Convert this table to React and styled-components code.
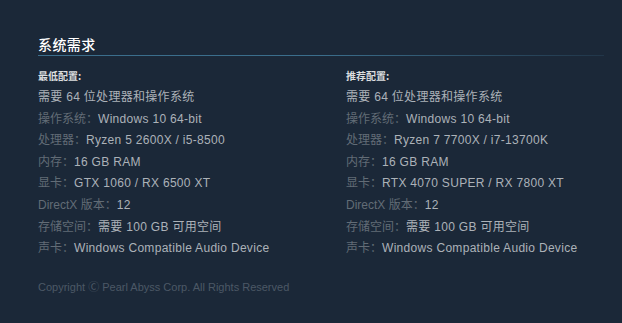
import React from 'react';
import styled, { createGlobalStyle } from 'styled-components';

const GlobalStyle = createGlobalStyle`
  html, body {
    margin: 0;
    padding: 0;
    background: #1b2838;
  }
  body {
    font-family: "Liberation Sans", Arial, "Noto Sans CJK SC", sans-serif;
  }
`;

const minimo = [
    { label: '操作系统：', value: 'Windows 10 64-bit' },
    { label: '处理器：', value: 'Ryzen 5 2600X / i5-8500' },
    { label: '内存：', value: '16 GB RAM' },
    { label: '显卡：', value: 'GTX 1060 / RX 6500 XT' },
    { label: 'DirectX 版本：', value: '12' },
    { label: '存储空间：', value: '需要 100 GB 可用空间' },
    { label: '声卡：', value: 'Windows Compatible Audio Device' },
];

const recomendado = [
    { label: '操作系统：', value: 'Windows 10 64-bit' },
    { label: '处理器：', value: 'Ryzen 7 7700X / i7-13700K' },
    { label: '内存：', value: '16 GB RAM' },
    { label: '显卡：', value: 'RTX 4070 SUPER / RX 7800 XT' },
    { label: 'DirectX 版本：', value: '12' },
    { label: '存储空间：', value: '需要 100 GB 可用空间' },
    { label: '声卡：', value: 'Windows Compatible Audio Device' },
];

const Columna = ({ titulo, filas }) => (
    <Col>
        <ColTitulo>{titulo}</ColTitulo>
        <Lista>
            <Fila>需要 64 位处理器和操作系统</Fila>
            {filas.map(f => (
                <Fila key={f.label}>
                    <Etiqueta>{f.label}</Etiqueta>{f.value}
                </Fila>
            ))}
        </Lista>
    </Col>
);

const App = () => {
    return (
        <Pagina>
            <GlobalStyle />
            <Titulo>系统需求</Titulo>
            <Columnas>
                <Columna titulo="最低配置:" filas={minimo} />
                <Columna titulo="推荐配置:" filas={recomendado} />
            </Columnas>
            <Copyright>Copyright Ⓒ Pearl Abyss Corp. All Rights Reserved</Copyright>
        </Pagina>
    );
}

export const Pagina = styled.div`
    width: 566px;
    padding: 35px 0 0 38px;
`;

export const Titulo = styled.h2`
    margin: 0;
    font-family: "Noto Sans CJK SC", sans-serif;
    font-weight: 500;
    font-size: 14px;
    letter-spacing: 0.03em;
    line-height: 18px;
    color: #ffffff;
    padding-bottom: 3px;
    background-image: linear-gradient(to right, #3b6e8c 0%, #3b6e8c 50%, rgba(59, 110, 140, 0.2) 100%);
    background-size: 100% 1px;
    background-repeat: no-repeat;
    background-position: bottom left;
`;

export const Columnas = styled.div`
    display: grid;
    grid-template-columns: 308px 1fr;
    margin-top: 13px;
`;

export const Col = styled.div`
    display: flex;
    flex-direction: column;
`;

export const ColTitulo = styled.div`
    font-family: "Noto Sans CJK SC", sans-serif;
    font-weight: 700;
    font-size: 10px;
    line-height: 14px;
    color: #dcdedf;
    margin-bottom: 4px;
`;

export const Lista = styled.ul`
    list-style: none;
    margin: 0;
    padding: 0;
`;

export const Fila = styled.li`
    font-size: 12px;
    letter-spacing: 0.3px;
    line-height: 21.6px;
    color: #acb2b8;
    white-space: nowrap;
`;

export const Etiqueta = styled.span`
    letter-spacing: 0;
    color: #626c76;
`;

export const Copyright = styled.div`
    margin-top: 18px;
    font-size: 11px;
    color: #4c5866;
`;

export default App
